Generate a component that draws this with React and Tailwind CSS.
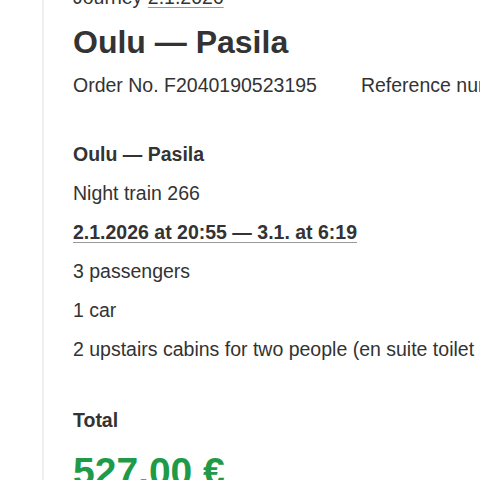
export default function App() {
  const f = { fontFamily: '"Liberation Sans", Arial, sans-serif' };
  return (
    <div className="w-[480px] h-[480px] overflow-hidden bg-white text-[#333]" style={f}>
      <div className="ml-[42px] border-l-2 border-[#efefef] pl-[29px] h-[520px] whitespace-nowrap">
        <div className="mt-[-22px] text-[19.5px] leading-[39px]">
          Journey <span className="underline decoration-[#999] underline-offset-[3px]">2.1.2026</span>
        </div>
        <h1 className="mt-[5px] text-[32px] leading-[40px] font-bold">Oulu — Pasila</h1>
        <div className="mt-[4px] text-[19.5px] leading-[39px] flex">
          <span className="mr-[44px]">Order No. F2040190523195</span>
          <span>Reference number 20401905231956</span>
        </div>
        <div className="mt-[30px] text-[19.5px] leading-[39px]">
          <div className="font-bold">Oulu — Pasila</div>
          <div>Night train 266</div>
          <div className="font-bold underline decoration-[#999] underline-offset-[3px]">2.1.2026 at 20:55 — 3.1. at 6:19</div>
          <div>3 passengers</div>
          <div>1 car</div>
          <div>2 upstairs cabins for two people (en suite toilet and shower)</div>
        </div>
        <div className="mt-[32px] text-[19.5px] leading-[39px] font-bold">Total</div>
        <div className="mt-[8px] text-[39px] leading-[48px] font-bold text-[#1f9a48]">527,00 €</div>
      </div>
    </div>
  );
}
